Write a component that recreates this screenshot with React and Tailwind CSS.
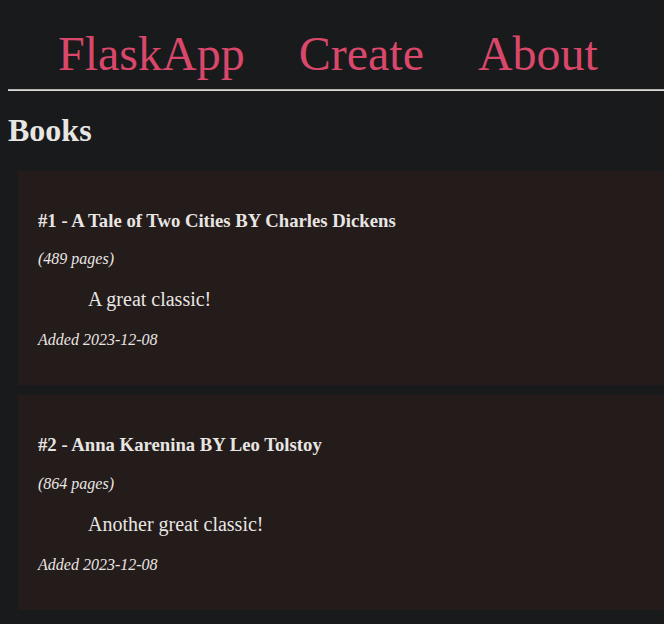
const books = [
  { id: 1, title: 'A Tale of Two Cities', author: 'Charles Dickens', pages: 489, review: 'A great classic!', added: '2023-12-08' },
  { id: 2, title: 'Anna Karenina', author: 'Leo Tolstoy', pages: 864, review: 'Another great classic!', added: '2023-12-08' },
];

export default function App() {
  return (
    <div className="min-h-screen overflow-hidden bg-[#181a1b] pl-2 font-['Liberation_Serif','Times_New_Roman',serif] leading-[normal] text-[16px] text-[#e8e6e3]">
      <nav className="pt-[26px]">
        <a href="#" className="ml-[50px] text-[48px] text-[#d9476a] no-underline">FlaskApp</a>{' '}
        <a href="#" className="ml-[50px] text-[48px] text-[#d9476a] no-underline">Create</a>{' '}
        <a href="#" className="ml-[50px] text-[48px] text-[#d9476a] no-underline">About</a>
      </nav>
      <hr className="my-2 border-t border-b border-t-[#b3b1ad] border-b-[#dddbd7]" />
      <h1 className="mt-[21.44px] mb-[21.44px] text-[32px] font-bold">Books</h1>
      {books.map((b) => (
        <div key={b.id} className="my-[10px] ml-[10px] bg-[#241b1b] p-5">
          <h3 className="my-[18.72px] text-[18.72px] font-bold">
            #{b.id} - {b.title} BY {b.author}
          </h3>
          <p className="my-4 italic">({b.pages} pages)</p>
          <p className="my-5 ml-[50px] text-[20px]">{b.review}</p>
          <p className="my-4 italic">Added {b.added}</p>
        </div>
      ))}
    </div>
  );
}
